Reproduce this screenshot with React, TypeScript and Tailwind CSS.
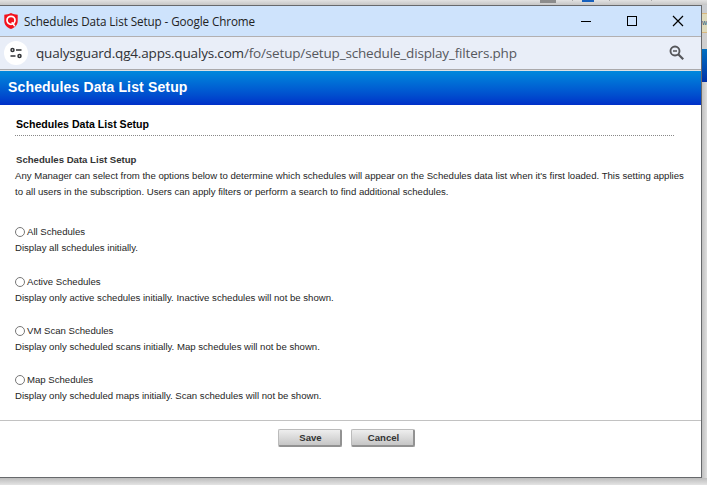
import React from "react";

function QualysShield() {
  return (
    <svg width="14" height="16" viewBox="0 0 14 16" className="block shrink-0">
      <path d="M7 0C9 1 11.500 1.600 13.700 1.700V8c0 4-3 6.600-6.700 8C3.300 14.600.3 12 .3 8V1.700C2.500 1.600 5 1 7 0Z" fill="#f3121d" />
      <circle cx="7" cy="7.300" r="4" fill="#f3121d" stroke="#fff" strokeWidth="1.700" />
      <path d="M7.800 9.200l3 4" stroke="#fff" strokeWidth="1.500" />
    </svg>
  );
}

function TuneIcon() {
  return (
    <svg width="12" height="12" viewBox="0 0 12 12" fill="none" stroke="#303236" strokeWidth="1.500" className="block">
      <circle cx="2.500" cy="3" r="1.500" />
      <path d="M6 3h5.500M.5 9h5" />
      <circle cx="9.500" cy="9" r="1.500" />
    </svg>
  );
}

function TitleBar() {
  return (
    <div className="flex h-[31px] items-center border-b border-[#b2b0b1] bg-[#cee3fc] text-[#222]">
      <div className="flex w-6 shrink-0 pl-1"><QualysShield /></div>
      <span className="grow font-['Open_Sans',sans-serif] text-[11.700px] leading-[16px] tracking-[-0.100px]">Schedules Data List Setup - Google Chrome</span>
      <svg width="120" height="30" viewBox="0 0 120 30" fill="none" stroke="#000" className="block shrink-0" shapeRendering="crispEdges">
        <path d="M0 15.500h10M46.500 10.500h9v9h-9z" />
        <path d="M92 10l10 10M102 10l-10 10" shapeRendering="auto" strokeWidth="1.200" />
      </svg>
    </div>
  );
}

function AddressBar() {
  return (
    <div className="flex h-[34px] items-center border-b border-[#dce0e4] bg-[#e9eef8]">
      <div className="flex h-full w-full items-center border-b border-[#aaa9ab]">
        <div className="ml-1 flex size-6 shrink-0 items-center justify-center rounded-full bg-white"><TuneIcon /></div>
        <span className="ml-2 grow whitespace-nowrap font-['Open_Sans',sans-serif] text-[13.500px] leading-5 tracking-[-0.170px] text-[#56585d]"><span className="text-[#303236]">qualysguard.qg4.apps.qualys.com</span>/fo/setup/setup_schedule_display_filters.php</span>
        <svg width="16" height="16" viewBox="0 0 16 16" fill="none" stroke="#55565a" strokeWidth="1.900" className="mr-4 block shrink-0">
          <circle cx="6" cy="6" r="4.500" />
          <path d="M9.200 9.200l5 5" strokeWidth="2.200" />
          <path d="M4 6h4" strokeWidth="1.500" />
        </svg>
      </div>
    </div>
  );
}

function Option({ label, text, className }: { label: string; text: string; className: string }) {
  return (
    <div className={className}>
      <label className="flex h-4 items-center">
        <input type="radio" name="schedule" className="size-[10px] shrink-0 appearance-none rounded-full border border-[#777] bg-white" />
        <span className="ml-[2px]">{label}</span>
      </label>
      <p className="h-4 whitespace-nowrap">{text}</p>
    </div>
  );
}

function Button({ children }: { children: string }) {
  return (
    <button className="flex h-[18px] w-16 items-center justify-center rounded-[2px] border border-t-[#bbb] border-r-2 border-b-2 border-l-[#bbb] border-r-[#929292] border-b-[#929292] bg-linear-to-b from-[#eee] to-[#c6c6c6] pt-px pl-[3px] text-[9.600px] font-bold text-[#333]">{children}</button>
  );
}

export default function App() {
  return (
    <div className="relative h-[485px] w-[707px] overflow-hidden bg-[#dedede] font-['Liberation_Sans',Arial,sans-serif]">
      <div className="flex h-[5px] items-start bg-linear-to-b from-[#e2e2e2] to-[#c6c6c6]">
        <i className="ml-[540px] h-[3px] w-4 bg-[#8c8c8c]" />
        <i className="ml-4 h-px w-px bg-[#aaa]" />
        <i className="ml-[9px] h-[2px] w-3 bg-[#1760bc]" />
        <i className="ml-[15px] h-px w-px bg-[#aaa]" />
        <i className="ml-[41px] h-px w-px bg-[#aaa]" />
      </div>
      <div className="flex h-[473px]">
        <main className="w-[702px] shrink-0 border-t border-r border-b border-[#67696c] bg-white">
          <TitleBar />
          <AddressBar />
          <h1 className="h-[34px] bg-linear-to-b from-[#0088dc] to-[#002fc8] pl-2 text-[14px] leading-[33px] font-bold text-white"><span className="tracking-[0.150px]">Schedules Data List Setup</span></h1>
          <div className="h-[315px] pt-[11px] pl-[15px] text-[9.610px] leading-4 text-[#252525]">
            <h2 className="h-[19px] w-[660px] pl-px text-[10.600px] leading-4 font-bold text-black">Schedules Data List Setup</h2>
            <svg width="660" height="1" className="block"><path d="M0 .5h660" stroke="#888" strokeDasharray="1 1" shapeRendering="crispEdges" /></svg>
            <h3 className="mt-4 h-4 pl-px font-bold text-[#333]">Schedules Data List Setup</h3>
            <p className="whitespace-nowrap">Any Manager can select from the options below to determine which schedules will appear on the Schedules data list when it's first loaded. This setting applies<br />to all users in the subscription. Users can apply filters or perform a search to find additional schedules.</p>
            <Option className="mt-6" label="All Schedules" text="Display all schedules initially." />
            <Option className="mt-[18px]" label="Active Schedules" text="Display only active schedules initially. Inactive schedules will not be shown." />
            <Option className="mt-[17px]" label="VM Scan Schedules" text="Display only scheduled scans initially. Map schedules will not be shown." />
            <Option className="mt-[17px]" label="Map Schedules" text="Display only scheduled maps initially. Scan schedules will not be shown." />
          </div>
          <footer className="flex h-[57px] justify-center gap-[9px] border-t border-[#c2c2c2] pt-2 pr-[9px]"><Button>Save</Button><Button>Cancel</Button></footer>
        </main>
        <aside className="w-[5px] bg-linear-to-r from-[#c0c0c0] to-[#dedede]">
          <div className="h-2 bg-[#c9ccd0]" />
          <div className="h-5 border-y border-[#d8b77e] bg-[#dedabb] text-[7px] leading-[17px] text-[#23527c]">w</div>
          <div className="h-4 bg-[#cfcfcf]" />
          <div className="h-[33px] bg-linear-to-b from-[#006fc0] to-[#0030a8]" />
        </aside>
      </div>
      <div className="h-[7px] bg-linear-to-b from-[#bcbcbc] to-[#e4e4e4]" />
    </div>
  );
}
